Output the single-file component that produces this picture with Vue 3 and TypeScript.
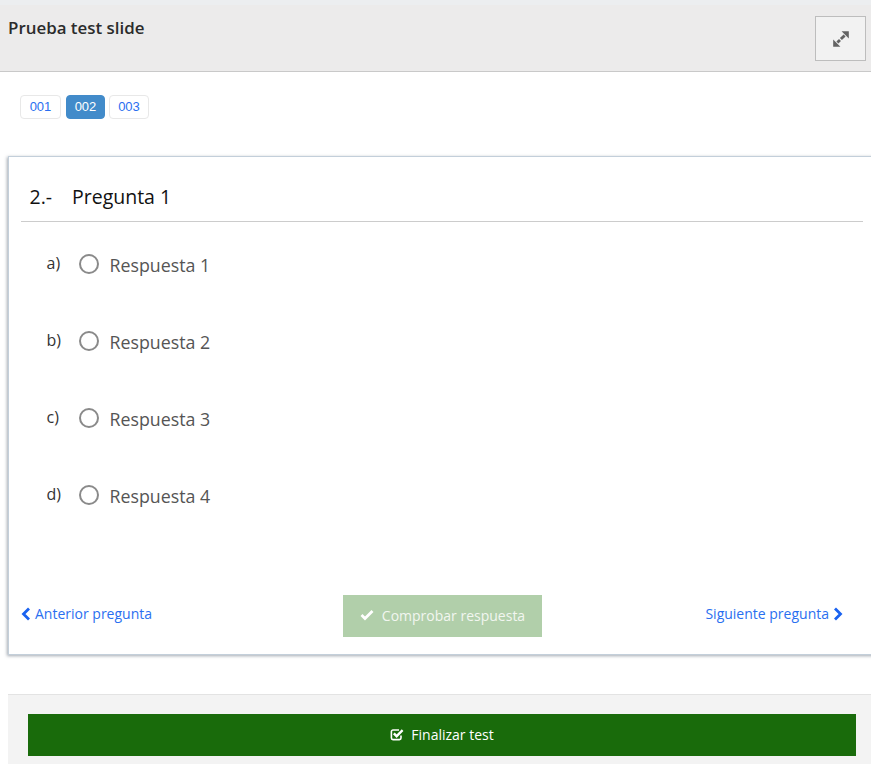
<script setup lang="ts">
const pages = [
  { label: '001', active: false },
  { label: '002', active: true },
  { label: '003', active: false },
]
const answers = [
  { key: 'a)', text: 'Respuesta 1' },
  { key: 'b)', text: 'Respuesta 2' },
  { key: 'c)', text: 'Respuesta 3' },
  { key: 'd)', text: 'Respuesta 4' },
]
</script>

<template>
  <div class="page">
    <header class="head">
      <h1 class="title">Prueba test slide</h1>
      <button class="expand" type="button" aria-label="Expandir">
        <svg width="18" height="18" viewBox="0 0 18 18">
          <path fill="#636363" d="M9.6 1.2H16.8V8.4Z" />
          <path fill="#636363" d="M1.2 16.8V9.6L8.4 16.8Z" />
          <path d="M12.6 5.4 8.9 9.1M5.4 12.6 8 10" fill="none" stroke="#636363" stroke-width="2.8" />
        </svg>
      </button>
    </header>

    <nav class="pager">
      <a v-for="p in pages" :key="p.label" class="pg" :class="{ on: p.active }">{{ p.label }}</a>
    </nav>

    <section class="card">
      <div class="question">
        <span class="num">2.-</span>
        <span>Pregunta 1</span>
      </div>

      <ul class="answers">
        <li v-for="a in answers" :key="a.key" class="answer">
          <span class="key">{{ a.key }}</span>
          <span class="radio"></span>
          <span class="txt">{{ a.text }}</span>
        </li>
      </ul>

      <div class="actions">
        <a class="link">
          <svg width="10" height="14" viewBox="0 0 10 14">
            <path d="M8 1.5 2.5 7 8 12.5" fill="none" stroke="#1a62f0" stroke-width="2.8" />
          </svg>
          Anterior pregunta
        </a>
        <button class="check" type="button">
          <svg width="14" height="12" viewBox="0 0 14 12">
            <path d="M1.5 6 5 9.5 12.5 2" fill="none" stroke="#fff" stroke-width="2.8" />
          </svg>
          Comprobar respuesta
        </button>
        <a class="link right">
          Siguiente pregunta
          <svg width="10" height="14" viewBox="0 0 10 14">
            <path d="M2 1.5 7.5 7 2 12.5" fill="none" stroke="#1a62f0" stroke-width="2.8" />
          </svg>
        </a>
      </div>
    </section>

    <footer class="foot">
      <button class="finish" type="button">
        <svg width="14" height="13" viewBox="0 0 14 13">
          <path d="M11 7.5V10a1.6 1.6 0 0 1-1.6 1.6H3A1.6 1.6 0 0 1 1.4 10V3.6A1.6 1.6 0 0 1 3 2h6" fill="none" stroke="#fff" stroke-width="1.6" />
          <path d="M3.8 5.4 6.6 8.2 12.6 2.2" fill="none" stroke="#fff" stroke-width="2.4" />
        </svg>
        Finalizar test
      </button>
    </footer>
  </div>
</template>

<style scoped>
.page {
  width: 871px;
  height: 764px;
  overflow: hidden;
  background: #fff;
  font-family: "Open Sans", "Liberation Sans", sans-serif;
  color: #333;
}
.head {
  box-sizing: border-box;
  height: 72px;
  border-top: 5px solid #eceef0;
  border-bottom: 1px solid #c9c9c9;
  background: #ecebeb;
  padding: 12px 5px 0 8px;
  display: flex;
  justify-content: space-between;
  align-items: flex-start;
}
.title {
  margin: 0;
  font-size: 16.9px;
  line-height: 22px;
  font-weight: 600;
  color: #2b2b2b;
}
.expand {
  box-sizing: border-box;
  width: 51px;
  height: 45px;
  margin-top: -1px;
  border: 1px solid #bdbdbd;
  background: #f2f2f2;
  padding: 0;
  display: flex;
  align-items: center;
  justify-content: center;
}
.pager {
  display: flex;
  gap: 4px;
  padding: 23px 0 0 20px;
}
.pg {
  box-sizing: border-box;
  width: 41px;
  height: 24px;
  border: 1px solid #e8e8e8;
  border-radius: 4px;
  font-family: "Liberation Sans", Arial, sans-serif;
  font-size: 13px;
  line-height: 22px;
  text-align: center;
  color: #2a6ff0;
  background: #fff;
}
.pg:first-child {
  margin-right: 1px;
}
.pg:last-child {
  width: 40px;
}
.pg.on {
  background: #428bca;
  border-color: #428bca;
  color: #fff;
  width: 39px;
}
.card {
  box-sizing: border-box;
  width: 880px;
  height: 499px;
  margin: 37px 0 0 8px;
  background: #fff;
  border: 1px solid #c3cfda;
  box-shadow: -1px 1px 3px rgba(90, 100, 115, 0.55);
  padding: 0 0 0 12px;
}
.question {
  box-sizing: border-box;
  width: 842px;
  height: 65px;
  border-bottom: 1px solid #cccccc;
  padding: 26px 0 0 8.5px;
  display: flex;
  font-size: 19.5px;
  line-height: 28px;
  font-weight: 400;
  color: #111;
}
.num {
  width: 42.5px;
}
.answers {
  list-style: none;
  margin: 0;
  padding: 0;
  height: 347px;
}
.answer {
  height: 77px;
  display: flex;
  align-items: flex-start;
  padding: 29px 0 0 25.5px;
  box-sizing: border-box;
}
.key {
  width: 32.5px;
  font-size: 16px;
  line-height: 26px;
  color: #333;
  margin-top: -1px;
}
.radio {
  box-sizing: border-box;
  width: 20px;
  height: 20px;
  border: 2px solid #8a8a8a;
  border-radius: 50%;
  margin-top: 3px;
  margin-right: 10.5px;
}
.txt {
  font-size: 17.8px;
  line-height: 28px;
  color: #555;
}
.actions {
  display: grid;
  grid-template-columns: 322px 199px 301px;
  align-items: start;
  margin-top: 26px;
}
.link {
  display: inline-flex;
  align-items: center;
  gap: 4px;
  font-size: 14px;
  line-height: 38px;
  color: #2a6ff0;
}
.link.right {
  justify-self: end;
}
.check {
  box-sizing: border-box;
  width: 199px;
  height: 42px;
  border: 0;
  background: #b1cfaa;
  color: #f2f6f0;
  font-family: inherit;
  font-size: 14px;
  display: inline-flex;
  align-items: center;
  justify-content: center;
  gap: 8px;
  padding: 0 0 2px;
}
.foot {
  box-sizing: border-box;
  height: 80px;
  margin: 39px 0 0 8px;
  width: 863px;
  border-top: 1px solid #e3e3e3;
  background: #f3f3f3;
  padding: 19px 15px 0 20px;
}
.finish {
  width: 100%;
  height: 42px;
  border: 0;
  background: #196b0b;
  color: #fff;
  font-family: inherit;
  font-size: 14px;
  font-weight: 500;
  display: flex;
  align-items: center;
  justify-content: center;
  gap: 7px;
  padding: 0 0 2px;
}
</style>
